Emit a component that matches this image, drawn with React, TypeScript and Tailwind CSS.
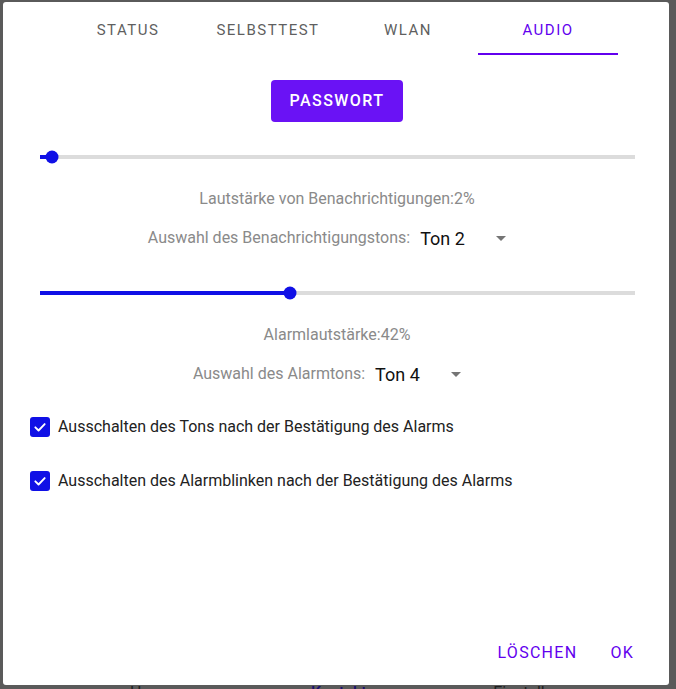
import { useState } from 'react'

const tabs = ['STATUS', 'SELBSTTEST', 'WLAN', 'AUDIO']

function Slider({ value }: { value: number }) {
  return (
    <div className="relative h-[24px] ml-[37px] mr-[34px]">
      <div className="absolute left-0 right-0 top-1/2 -translate-y-1/2 h-[4px] bg-[#dcdcdc]" />
      <div
        className="absolute left-0 top-1/2 -translate-y-1/2 h-[4px] bg-[#1010e6]"
        style={{ width: `${value}%` }}
      />
      <div
        className="absolute top-1/2 w-[13px] h-[13px] -translate-x-1/2 -translate-y-1/2 rounded-full bg-[#1010e6]"
        style={{ left: `${value}%` }}
      />
    </div>
  )
}

function SelectRow({ label, value }: { label: string; value: string }) {
  return (
    <div className="flex items-center justify-center h-[32px] pr-[4px]">
      <span className="text-[16px] text-[#8a8a8a]">{label}</span>
      <div className="ml-[10px] w-[100px] flex items-center">
        <span className="text-[18px] text-[#111]">{value}</span>
        <svg className="ml-auto mr-[14px]" width="10" height="5" viewBox="0 0 10 5">
          <path d="M0 0 L10 0 L5 5 Z" fill="#757575" />
        </svg>
      </div>
    </div>
  )
}

function CheckRow({ label }: { label: string }) {
  return (
    <div className="flex items-center h-[24px] pl-[27px]">
      <div className="w-[20px] h-[20px] rounded-[3px] bg-[#1010e6] flex items-center justify-center">
        <svg width="14" height="14" viewBox="0 0 24 24" fill="none">
          <path d="M4 12.5 L9.5 18 L20 7" stroke="white" strokeWidth="3.2" strokeLinecap="round" strokeLinejoin="round" />
        </svg>
      </div>
      <span className="ml-[8px] text-[16px] text-[#222]">{label}</span>
    </div>
  )
}

export default function App() {
  const [active, setActive] = useState(3)

  return (
    <div className="w-[676px] h-[689px] overflow-hidden bg-[#5a5a5a] pt-[2px] font-['Roboto',_'Liberation_Sans',_sans-serif]">
      {/* Dialog */}
      <div className="ml-[3px] w-[666px] h-[683px] bg-white rounded-[3px] flex flex-col">
        {/* Tabs */}
        <div className="mt-[5px] h-[48px] flex justify-center pl-[4px]">
          {tabs.map((t, i) => (
            <button
              key={t}
              onClick={() => setActive(i)}
              className={`w-[140px] h-full flex items-center justify-center text-[15px] font-normal tracking-[0.1em] border-b-2 ${
                i === active ? 'text-[#6200ee] border-[#6200ee]' : 'text-[#5f5f5f] border-transparent'
              }`}
            >
              {t}
            </button>
          ))}
        </div>

        {/* Password */}
        <div className="mt-[25px] flex justify-center pl-[2px]">
          <button className="w-[132px] h-[42px] rounded-[4px] bg-[#6a12f5] text-white text-[16px] font-medium tracking-[0.09em]">
            PASSWORT
          </button>
        </div>

        {/* Notification volume */}
        <div className="mt-[23px]">
          <Slider value={2} />
        </div>
        <div className="mt-[20px] text-center text-[16px] leading-[20px] text-[#8a8a8a] pl-[2px]">
          Lautstärke von Benachrichtigungen:2%
        </div>
        <div className="mt-[13px]">
          <SelectRow label="Auswahl des Benachrichtigungstons:" value="Ton 2" />
        </div>

        {/* Alarm volume */}
        <div className="mt-[27px]">
          <Slider value={42} />
        </div>
        <div className="mt-[20px] text-center text-[16px] leading-[20px] text-[#8a8a8a] pl-[2px]">
          Alarmlautstärke:42%
        </div>
        <div className="mt-[13px]">
          <SelectRow label="Auswahl des Alarmtons:" value="Ton 4" />
        </div>

        {/* Checkboxes */}
        <div className="mt-[25px]">
          <CheckRow label="Ausschalten des Tons nach der Bestätigung des Alarms" />
        </div>
        <div className="mt-[30px]">
          <CheckRow label="Ausschalten des Alarmblinken nach der Bestätigung des Alarms" />
        </div>

        {/* Footer */}
        <div className="mt-auto mb-[14px] h-[36px] flex items-center justify-end gap-[33px] pr-[35px]">
          <button className="text-[16px] font-normal tracking-[0.08em] text-[#6200ee]">LÖSCHEN</button>
          <button className="text-[16px] font-normal tracking-[0.08em] text-[#6200ee]">OK</button>
        </div>
      </div>

      {/* Page behind the overlay */}
      <div className="flex h-[10px] text-[16px] leading-none">
        <span className="ml-[130px] text-[#1e1e1e]">Home</span>
        <span className="ml-[138px] text-[#1a0f70] font-medium">Kontakte</span>
        <span className="ml-[118px] text-[#1e1e1e]">Einstellungen</span>
      </div>
    </div>
  )
}
